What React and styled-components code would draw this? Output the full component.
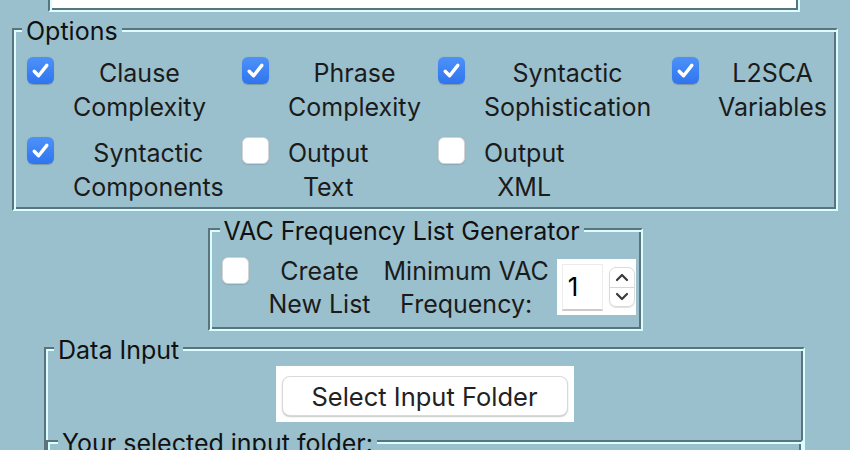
import React from 'react';
import styled, {createGlobalStyle} from 'styled-components';

const bg = '#9AC0CD';
const dark = '#5C737B';
const light = '#D7FFFF';

const GlobalStyle = createGlobalStyle`
  html, body {
    margin: 0;
    padding: 0;
    background: ${bg};
    overflow: hidden;
  }
  body {
    font-family: Inter, "Noto Sans", sans-serif;
    color: #1b1b1b;
  }
`;

const Window = styled.div`
  width: 850px;
  height: 450px;
  overflow: hidden;
  background: ${bg};
  display: flex;
  flex-direction: column;
  align-items: flex-start;
`;

// bottom edge of the text box that is scrolled above the view
const TopBox = styled.div`
  box-sizing: border-box;
  margin-left: 48px;
  width: 752px;
  height: 12px;
  flex-shrink: 0;
  background: #fff;
  border-style: solid;
  border-width: 0 2px 2px 2px;
  border-color: ${dark} ${light} ${light} ${dark};
  box-shadow: inset 2px 0 0 ${light}, inset -2px -2px 0 ${dark};
`;

const Frame = styled.div`
  position: relative;
  box-sizing: border-box;
  flex-shrink: 0;
  border-style: solid;
  border-width: 2px;
  border-color: ${dark} ${light} ${light} ${dark};
  box-shadow: inset 2px 2px 0 ${light}, inset -2px -2px 0 ${dark};
`;

const OptionsFrame = styled(Frame)`
  margin: 16px 0 0 12px;
  width: 826px;
  padding: 26px 0 5px 13px;
`;

const VacFrame = styled(Frame)`
  align-self: center;
  margin-top: 17px;
  width: 435px;
  padding: 25px 0 8px 12px;
  display: flex;
  align-items: flex-start;
`;

const DataFrame = styled(Frame)`
  margin: 16px 0 0 44px;
  width: 761px;
  padding-top: 17px;
  display: flex;
  flex-direction: column;
  align-items: center;
`;

const FolderFrame = styled(Frame)`
  align-self: stretch;
  margin-top: 18px;
  height: 60px;
`;

// label drawn over the frame's top border, as a Tk labelframe does
const Title = styled.span`
  position: absolute;
  top: -14px;
  left: ${p => p.$left || 8}px;
  padding: 0 4px;
  background: ${bg};
  font-size: 25px;
  line-height: 30px;
  color: #111;
  white-space: nowrap;
`;

const OptionGrid = styled.div`
  display: grid;
  grid-template-columns: 215px 196px 234px auto;
  row-gap: 12px;
  justify-items: start;
`;

const Check = styled.div`
  display: flex;
  align-items: flex-start;
  gap: ${p => p.$gap || 19}px;
  margin-right: ${p => p.$after || 0}px;
`;

const Box = styled.span`
  flex-shrink: 0;
  box-sizing: border-box;
  width: 27px;
  height: 27px;
  margin-top: ${p => p.$top || 1}px;
  border-radius: 6px;
  display: flex;
  align-items: center;
  justify-content: center;
  background: ${p => (p.$checked ? 'linear-gradient(#4d92f9, #2f74ef)' : '#fff')};
  border: ${p => (p.$checked ? 'none' : '1px solid #d4d4d4')};
  box-shadow: ${p => (p.$checked ? '0 0.5px 1px rgba(0,0,0,0.2)' : '0 0.5px 1px rgba(0,0,0,0.12)')};
`;

const Label = styled.span`
  font-size: 25px;
  line-height: ${p => p.$lh || 34}px;
  text-align: center;
  white-space: pre;
  color: #1b1b1b;
`;

const CheckBox = ({checked, top}) => (
  <Box $checked={checked} $top={top}>
    {checked && (
      <svg width="27" height="27" viewBox="0 0 27 27">
        <path d="M7.2 14.2 L11.6 18.8 L19.8 8.4" fill="none" stroke="#fff"
          strokeWidth="3.4" strokeLinecap="round" strokeLinejoin="round" />
      </svg>
    )}
  </Box>
);

const SpinWell = styled.div`
  margin: 4px 0 0 8px;
  width: 79px;
  height: 56px;
  box-sizing: border-box;
  padding: 5px 0 0 5px;
  background: #fff;
  display: flex;
  align-items: flex-start;
`;

const SpinEntry = styled.div`
  box-sizing: border-box;
  width: 41px;
  height: 47px;
  border: 1px solid #ececec;
  border-bottom: 2px solid #cbcbcb;
  padding-left: 5px;
  font-size: 26px;
  line-height: 44px;
  color: #000;
`;

const Stepper = styled.div`
  box-sizing: border-box;
  margin: 3px 0 0 6px;
  width: 26px;
  height: 40px;
  border-radius: 7px;
  border: 1px solid #dadada;
  box-shadow: 0 1px 1px rgba(0,0,0,0.12);
  display: flex;
  flex-direction: column;
`;

const StepHalf = styled.div`
  flex: 1;
  display: flex;
  align-items: center;
  justify-content: center;
  border-top: ${p => (p.$lower ? '1px solid #d6d6d6' : 'none')};
`;

const Chevron = ({up}) => (
  <svg width="14" height="9" viewBox="0 0 14 9">
    <path d={up ? 'M2 7 L7 2 L12 7' : 'M2 2 L7 7 L12 2'} fill="none" stroke="#3a3a3a"
      strokeWidth="2.2" strokeLinecap="round" strokeLinejoin="round" />
  </svg>
);

const ButtonWell = styled.div`
  background: #fff;
  padding: 10px 6px 6px 6px;
`;

const Button = styled.button`
  box-sizing: border-box;
  width: 286px;
  height: 40px;
  border-radius: 8px;
  border: 1px solid #d9d9d9;
  background: #fff;
  box-shadow: 0 1px 1.5px rgba(0,0,0,0.22);
  font-family: Inter, "Noto Sans", sans-serif;
  font-size: 25.5px;
  color: #222;
  padding: 0;
`;

const options = [
  {text: 'Clause\nComplexity', checked: true},
  {text: 'Phrase\nComplexity', checked: true},
  {text: 'Syntactic\nSophistication', checked: true},
  {text: 'L2SCA\nVariables', checked: true},
  {text: 'Syntactic\nComponents', checked: true},
  {text: 'Output\nText', checked: false},
  {text: 'Output\nXML', checked: false},
];

export default function App() {
  return (
    <Window>
      <GlobalStyle />
      <TopBox />

      <OptionsFrame>
        <Title>Options</Title>
        <OptionGrid>
          {options.map(o => (
            <Check key={o.text}>
              <CheckBox checked={o.checked} />
              <Label>{o.text}</Label>
            </Check>
          ))}
        </OptionGrid>
      </OptionsFrame>

      <VacFrame>
        <Title $left={10}>VAC Frequency List Generator</Title>
        <Check $gap={20} $after={13}>
          <CheckBox checked={false} top={2} />
          <Label $lh={33}>{'Create\nNew List'}</Label>
        </Check>
        <Label $lh={33}>{'Minimum VAC\nFrequency:'}</Label>
        <SpinWell>
          <SpinEntry>1</SpinEntry>
          <Stepper>
            <StepHalf><Chevron up /></StepHalf>
            <StepHalf $lower><Chevron /></StepHalf>
          </Stepper>
        </SpinWell>
      </VacFrame>

      <DataFrame>
        <Title>Data Input</Title>
        <ButtonWell>
          <Button>Select Input Folder</Button>
        </ButtonWell>
        <FolderFrame>
          <Title $left={10}>Your selected input folder:</Title>
        </FolderFrame>
      </DataFrame>
    </Window>
  );
}
